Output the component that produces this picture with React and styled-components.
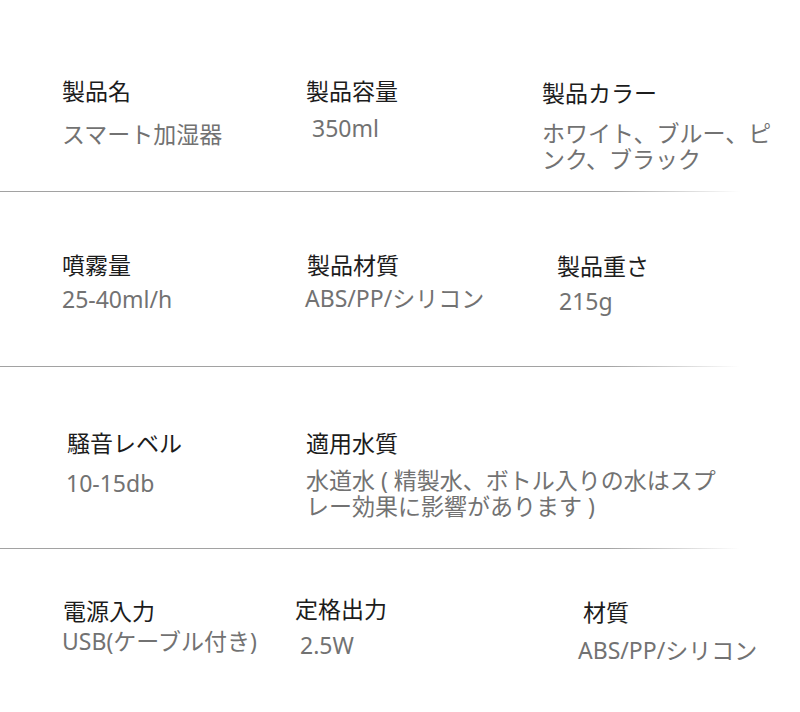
import React from 'react';
import styled, { createGlobalStyle } from 'styled-components';

const GlobalStyle = createGlobalStyle`
  html, body {
    margin: 0;
    padding: 0;
    background: #ffffff;
  }
  body {
    font-family: "Noto Sans", "Noto Sans CJK JP", sans-serif;
  }
`;

const Page = styled.div`
  width: 800px;
  height: 712px;
  background: #ffffff;
  overflow: hidden;
`;

const Row = styled.section`
  display: grid;
  grid-template-columns: 233px 247px 1fr;
  padding-left: 62px;
  height: ${(props) => props.$height}px;
  align-items: start;
`;

const Cell = styled.div`
  display: flex;
  flex-direction: column;
  padding-top: ${(props) => props.$top}px;
`;

const Label = styled.h3`
  margin: 0 0 0 ${(props) => props.$x || 0}px;
  font-size: 23px;
  line-height: 26px;
  font-weight: 400;
  color: #1c1c1c;
  white-space: nowrap;
`;

const Value = styled.p`
  margin: ${(props) => props.$gap || 0}px 0 0 ${(props) => props.$x || 0}px;
  font-size: 23px;
  line-height: 26px;
  font-weight: 400;
  color: #727272;
  white-space: pre;
`;

const Divider = styled.hr`
  margin: 0;
  border: none;
  width: 740px;
  height: 1px;
  background: linear-gradient(to right, #a2a2a2 0%, #a2a2a2 82%, rgba(162, 162, 162, 0) 100%);
`;

const rows = [
  {
    height: 191,
    cells: [
      { top: 78, label: '製品名', value: ['スマート加湿器'], gap: 17 },
      { top: 78, lx: 11, label: '製品容量', value: ['350ml'], vx: 17, gap: 11 },
      { top: 80, label: '製品カラー', value: ['ホワイト、ブルー、ピ', 'ンク、ブラック'], gap: 14 },
    ],
  },
  {
    height: 174,
    cells: [
      { top: 60, label: '噴霧量', value: ['25-40ml/h'], gap: 8 },
      { top: 60, lx: 12, label: '製品材質', value: ['ABS/PP/シリコン'], vx: 10, gap: 7 },
      { top: 61, lx: 15, label: '製品重さ', value: ['215g'], vx: 17, gap: 9 },
    ],
  },
  {
    height: 181,
    cells: [
      { top: 63, lx: 5, label: '騒音レベル', value: ['10-15db'], vx: 4, gap: 14 },
      {
        top: 63,
        lx: 11,
        label: '適用水質',
        value: ['水道水 ( 精製水、ボトル入りの水はスプ', 'レー効果に影響があります )'],
        vx: 11,
        gap: 11,
      },
    ],
  },
  {
    height: 163,
    cells: [
      { top: 49, lx: 1, label: '電源入力', value: ['USB(ケーブル付き)'], gap: 4 },
      { top: 47, label: '定格出力', value: ['2.5W'], vx: 5, gap: 10 },
      { top: 50, lx: 41, label: '材質', value: ['ABS/PP/シリコン'], vx: 36, gap: 12 },
    ],
  },
];

function SpecCell({ cell }) {
  return (
    <Cell $top={cell.top}>
      <Label $x={cell.lx}>{cell.label}</Label>
      <Value $x={cell.vx} $gap={cell.gap}>
        {cell.value.join('\n')}
      </Value>
    </Cell>
  );
}

export default function App() {
  return (
    <Page>
      <GlobalStyle />
      {rows.map((row, i) => (
        <React.Fragment key={i}>
          <Row $height={row.height}>
            {row.cells.map((cell) => (
              <SpecCell key={cell.label} cell={cell} />
            ))}
          </Row>
          {i < rows.length - 1 && <Divider />}
        </React.Fragment>
      ))}
    </Page>
  );
}
